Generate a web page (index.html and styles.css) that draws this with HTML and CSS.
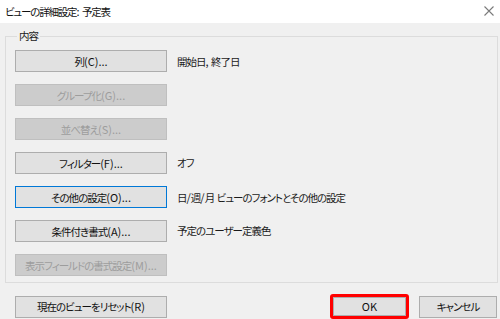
FILE: index.html
```html
<!DOCTYPE html>
<html lang="ja">
<head>
<meta charset="utf-8">
<link rel="stylesheet" href="styles.css">
</head>
<body>
<div class="dialog">
  <div class="titlebar">
    <span class="title">ビューの詳細設定<span class="lat">: </span>予定表</span>
    <svg class="close" width="10" height="10" viewBox="0 0 10 10"><path d="M0.5 0.5 L9.5 9.5 M9.5 0.5 L0.5 9.5" stroke="#7a7a7a" stroke-width="1.1" fill="none"/></svg>
  </div>
  <div class="body">
    <fieldset class="group">
      <legend class="legend">内容</legend>
      <div class="row"><button class="btn wide">列<span class="lat">(C)...</span></button><span class="desc">開始日<span class="lat">, </span>終了日</span></div>
      <div class="row"><button class="btn wide disabled">グループ化<span class="lat">(G)...</span></button></div>
      <div class="row"><button class="btn wide disabled">並べ替え<span class="lat">(S)...</span></button></div>
      <div class="row"><button class="btn wide">フィルター<span class="lat">(F)...</span></button><span class="desc">オフ</span></div>
      <div class="row"><button class="btn wide focus">その他の設定<span class="lat">(O)...</span></button><span class="desc">日<span class="lat">/</span>週<span class="lat">/</span>月<span class="lat"> </span>ビューのフォントとその他の設定</span></div>
      <div class="row"><button class="btn wide">条件付き書式<span class="lat">(A)...</span></button><span class="desc">予定のユーザー定義色</span></div>
      <div class="row"><button class="btn wide disabled">表示フィールドの書式設定<span class="lat">(M)...</span></button></div>
    </fieldset>
    <div class="footer">
      <button class="btn wide">現在のビューをリセット<span class="lat">(R)</span></button>
      <div class="highlight"><button class="btn ok"><span class="lat">OK</span></button></div>
      <button class="btn cancel">キャンセル</button>
    </div>
  </div>
</div>
</body>
</html>
```
FILE: styles.css
```css
* { box-sizing: border-box; }
html, body { margin: 0; padding: 0; }
body {
  width: 500px;
  height: 319px;
  overflow: hidden;
  font-family: "Noto Sans CJK JP", "Noto Sans", sans-serif;
  font-size: 10.5px;
  letter-spacing: -1px;
  font-feature-settings: "palt";
  color: #1a1a1a;
  background: #f0f0f0;
}
.lat { letter-spacing: 0; font-size: 11px; }
.dialog { width: 500px; height: 319px; display: flex; flex-direction: column; }
.titlebar {
  height: 23px;
  background: #ffffff;
  display: flex;
  align-items: center;
  padding: 0 6px 1px 5px;
  justify-content: space-between;
}
.title { line-height: 16px; color: #111; font-size: 10.5px; letter-spacing: -1.2px; }
.body { flex: 1; background: #f0f0f0; }
.group {
  margin: 5px 0 0 5px;
  width: 493px;
  border: 1px solid #dcdcdc;
  padding: 6px 0 6px 9px;
  display: flex;
  flex-direction: column;
  gap: 12px;
}
.legend {
  padding: 0 2px;
  margin-left: 2px;
  line-height: 16px;
}
.row { display: flex; align-items: center; height: 22px; }
.btn {
  font-family: inherit;
  font-size: 10.5px;
  letter-spacing: -1px;
  font-feature-settings: "palt";
  white-space: nowrap;
  color: #111;
  background: #e1e1e1;
  border: 1px solid #adadad;
  height: 22px;
  padding: 0;
  margin: 0;
  line-height: 18px;
}
.wide { width: 152px; }
.disabled { background: #cccccc; border-color: #bfbfbf; color: #9d9d9d; }
.focus { border-color: #0078d7; }
.desc { margin-left: 10px; line-height: 16px; white-space: nowrap; }
.footer {
  display: flex;
  align-items: center;
  padding: 11px 3px 0 15px;
}
.highlight {
  margin-left: auto;
  border: 3px solid #ff0000;
  border-radius: 3px;
  width: 79px;
  height: 25px;
  display: flex;
}
.ok { width: 73px; height: 19px; line-height: 16px; }
.cancel { width: 78px; margin-left: 10px; }
```
